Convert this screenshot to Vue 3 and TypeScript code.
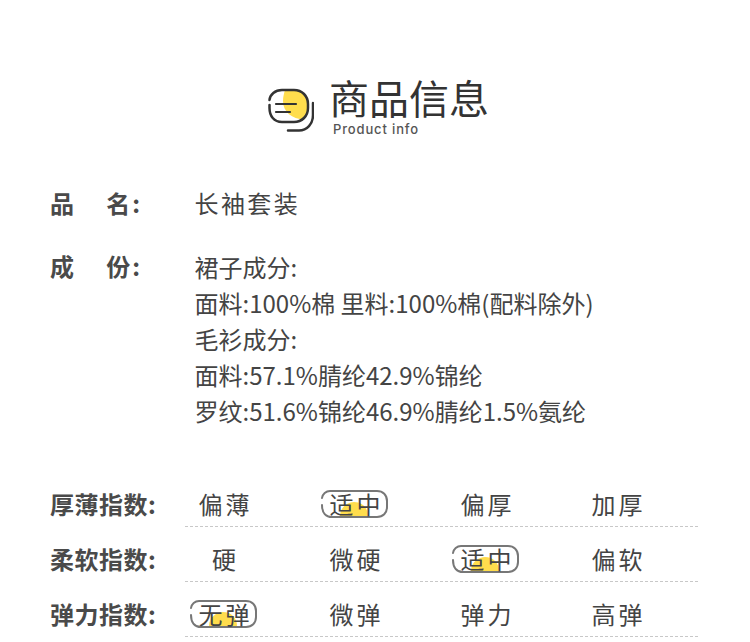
<script setup lang="ts">
interface Scale { label: string; options: string[]; active: number }
const composition: string[] = [
  '裙子成分:',
  '面料:100%棉 里料:100%棉(配料除外)',
  '毛衫成分:',
  '面料:57.1%腈纶42.9%锦纶',
  '罗纹:51.6%锦纶46.9%腈纶1.5%氨纶',
]
const scales: Scale[] = [
  { label: '厚薄指数:', options: ['偏薄', '适中', '偏厚', '加厚'], active: 1 },
  { label: '柔软指数:', options: ['硬', '微硬', '适中', '偏软'], active: 2 },
  { label: '弹力指数:', options: ['无弹', '微弹', '弹力', '高弹'], active: 0 },
]
</script>

<template>
  <div class="page">
    <header class="head">
      <svg class="logo" width="48" height="46" viewBox="0 0 48 46" fill="none">
        <path d="M19 4H28C36 4 42 10 42 18V22C42 27 41 31 38 33.500C26 33 17 26 17 15C17 11 18 7 19 4Z" fill="#ffdd4d" />
        <path d="M3.500 14C4 8.500 9 4 16 4H28C36 4 42 10 42 18V22C42 30 36 36 28 36H16C8 36 3.500 30 3.500 22V19" stroke="#333" stroke-width="2.500" stroke-linecap="round" />
        <path d="M10 18H30M10 26H24" stroke="#333" stroke-width="2.200" stroke-linecap="round" />
        <path d="M47 17V29C47 38 41 44.500 33 44.500H22" stroke="#333" stroke-width="2.500" stroke-linecap="round" />
      </svg>
      <div class="head-text">
        <div class="title">商品信息</div>
        <div class="sub">Product info</div>
      </div>
    </header>

    <div class="spec name-row">
      <div class="label"><span>品</span><span class="second">名:</span></div>
      <div class="value name">长袖套装</div>
    </div>
    <div class="spec comp-row">
      <div class="label"><span>成</span><span class="second">份:</span></div>
      <div class="value comp-lines">
        <div v-for="line in composition" :key="line">{{ line }}</div>
      </div>
    </div>

    <div class="scales">
      <div v-for="s in scales" :key="s.label" class="scale">
        <div class="scale-label">{{ s.label }}</div>
        <div class="options">
          <div v-for="(o, i) in s.options" :key="o" class="option">
            <span :class="['opt-text', { active: i === s.active }]">
              <svg v-if="i === s.active" class="badge" width="67" height="28" viewBox="0 0 67 28" fill="none">
                <path d="M19 26C19 17 27 12 33 12C41 12 47 18 47 26Z" fill="#ffdd4d" />
                <path d="M1 8C1.500 4 5 1 9 1H56C62 1 66 5 66 11V17C66 23 62 27 56 27H11C5 27 1 23 1 15" stroke="#777" stroke-width="2" stroke-linecap="round" />
              </svg>
              <b>{{ o }}</b>
            </span>
          </div>
        </div>
      </div>
    </div>
  </div>
</template>

<style>
html, body { background: #fff; }
</style>

<style scoped>
.page {
  width: 750px;
  height: 642px;
  overflow: hidden;
  box-sizing: border-box;
  padding: 72px 52px 0 50px;
  font-family: "Noto Sans CJK SC", "Noto Sans", sans-serif;
  color: #444;
  background: #fff;
}
.head {
  display: flex;
  align-items: flex-start;
  padding-left: 216px;
  height: 89px;
}
.logo { margin-top: 14px; margin-right: 15px; flex: none; }
.title {
  font-size: 40px;
  line-height: 46px;
  margin-top: 2px;
  color: #333;
  white-space: nowrap;
}
.sub {
  font-family: Inter, "Noto Sans", sans-serif;
  font-size: 13px;
  font-weight: 500;
  line-height: 14px;
  color: #555;
  margin-left: 4px;
  margin-top: 2px;
  letter-spacing: 0.850px;
  white-space: nowrap;
}
.spec { display: flex; font-size: 24px; line-height: 36px; }
.name-row { margin-top: 24px; }
.comp-row { margin-top: 27px; }
.label {
  width: 92px;
  margin-right: 52.500px;
  display: flex;
  justify-content: space-between;
  font-weight: 700;
  color: #4a4a4a;
  flex: none;
}
.label span { white-space: nowrap; }
.label .second { letter-spacing: 2px; }
.value { white-space: nowrap; }
.comp-lines { margin-top: 1px; }
.name { letter-spacing: 2.400px; }
.scales { margin-top: 43px; }
.scale {
  display: flex;
  height: 55px;
  font-size: 24px;
}
.scale-label {
  width: 135px;
  flex: none;
  font-weight: 700;
  color: #4a4a4a;
  box-sizing: border-box;
  padding-top: 10px;
  line-height: 43px;
  height: 54px;
  letter-spacing: 0.500px;
  white-space: nowrap;
}
.options {
  flex: 1;
  display: flex;
  gap: 53px;
  height: 55px;
  box-sizing: border-box;
  border-bottom: 1px dashed #c8c8c8;
}
.option {
  width: 78px;
  flex: none;
  display: flex;
  justify-content: center;
  align-items: center;
  box-sizing: border-box;
  padding-top: 10px;
  height: 54px;
}
.opt-text {
  position: relative;
  display: block;
  line-height: 28px;
  letter-spacing: 3px;
  padding-left: 3px;
  white-space: nowrap;
}
.opt-text b { position: relative; font-weight: 400; }
.opt-text.active {
  width: 67px;
  height: 28px;
  box-sizing: border-box;
  padding-left: 9px;
  margin-left: -1px;
  margin-right: 1px;
  flex: none;
}
.badge { position: absolute; left: 0; top: 0; }
</style>
